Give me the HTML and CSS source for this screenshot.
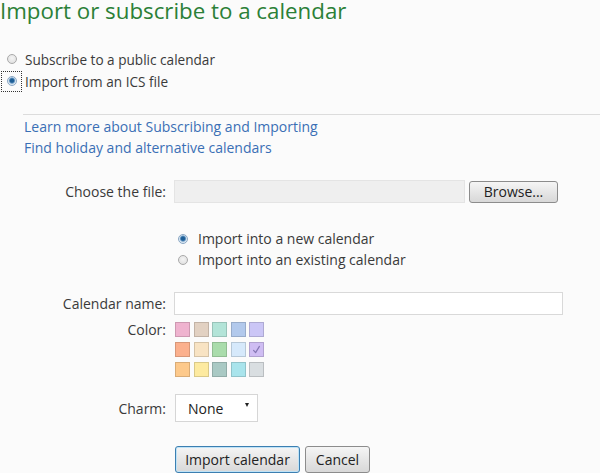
FILE: index.html
```html
<!DOCTYPE html>
<html lang="en">
<head>
<meta charset="utf-8">
<title>Import or subscribe to a calendar</title>
<link rel="stylesheet" href="styles.css">
</head>
<body>
<h1 class="title">Import or subscribe to a calendar</h1>

<div class="source-options">
  <label class="source-option">
    <span class="focus-box"><span class="radio"></span></span>
    <span class="source-text">Subscribe to a public calendar</span>
  </label>
  <label class="source-option">
    <span class="focus-box focused"><span class="radio checked"></span></span>
    <span class="source-text tight">Import from an ICS file</span>
  </label>
</div>

<div class="divider"></div>

<div class="links">
  <a class="link" href="#">Learn more about Subscribing and Importing</a>
  <a class="link" href="#">Find holiday and alternative calendars</a>
</div>

<div class="form">
  <div class="row row-file">
    <span class="label">Choose the file:</span>
    <span class="file-field"></span>
    <button class="btn btn-browse" type="button">Browse...</button>
  </div>

  <div class="row row-target">
    <span class="label"></span>
    <div class="target-options">
      <label class="target-option"><span class="radio checked"></span><span>Import into a new calendar</span></label>
      <label class="target-option"><span class="radio"></span><span>Import into an existing calendar</span></label>
    </div>
  </div>

  <div class="row row-name">
    <span class="label">Calendar name:</span>
    <span class="text-field"></span>
  </div>

  <div class="row row-color">
    <span class="label label-color">Color:</span>
    <div class="swatches">
      <span class="swatch s1"></span>
      <span class="swatch s2"></span>
      <span class="swatch s3"></span>
      <span class="swatch s4"></span>
      <span class="swatch s5"></span>
      <span class="swatch s6"></span>
      <span class="swatch s7"></span>
      <span class="swatch s8"></span>
      <span class="swatch s9"></span>
      <span class="swatch s10 selected">
        <svg class="check" viewBox="0 0 15 15" width="15" height="15"><path d="M4.6 8.4 L6.6 10.6 L10.4 4.4" fill="none" stroke="#8577b4" stroke-width="1.2" stroke-linecap="round" stroke-linejoin="round"/></svg>
      </span>
      <span class="swatch s11"></span>
      <span class="swatch s12"></span>
      <span class="swatch s13"></span>
      <span class="swatch s14"></span>
      <span class="swatch s15"></span>
    </div>
  </div>

  <div class="row row-charm">
    <span class="label">Charm:</span>
    <span class="select"><span class="select-text">None</span><span class="select-arrow"></span></span>
  </div>

  <div class="row row-actions">
    <span class="label"></span>
    <button class="btn btn-primary" type="button">Import calendar</button>
    <button class="btn btn-cancel" type="button">Cancel</button>
  </div>
</div>
</body>
</html>
```

FILE: styles.css
```css
html, body {
  margin: 0;
  padding: 0;
}

body {
  background: #fbfbfb;
  font-family: "Open Sans", "Noto Sans", sans-serif;
  font-size: 14px;
  color: #3a3a3a;
  width: 600px;
  height: 473px;
  overflow: hidden;
}

.title {
  margin: -3px 0 0 0;
  font-size: 22.3px;
  line-height: 27px;
  font-weight: 400;
  color: #2b8037;
  white-space: nowrap;
}

.source-options {
  margin-top: 24px;
  display: flex;
  flex-direction: column;
}

.source-option {
  display: flex;
  align-items: center;
  height: 22px;
}

.focus-box {
  width: 21px;
  height: 21px;
  box-sizing: border-box;
  margin-left: 1px;
  border: 1px dotted transparent;
  display: flex;
  align-items: center;
  justify-content: center;
}

.focus-box.focused {
  border-color: #333;
}

.source-text {
  margin-left: 3px;
  font-size: 13.6px;
}

.radio {
  width: 10px;
  height: 10px;
  box-sizing: border-box;
  border-radius: 50%;
  border: 1px solid #a9a9a9;
  background: radial-gradient(circle at 50% 40%, #f4f4f4 0%, #dcdcdc 100%);
  display: inline-block;
  flex: none;
}

.radio.checked {
  border-color: #8aa7c4;
  background: radial-gradient(circle at 50% 45%, #1d5e96 0 28%, #5b8fbd 42%, #d9e6f1 60%, #eef3f8 100%);
}

.divider {
  margin: 22px 0 0 23px;
  height: 1px;
  background: #dcdcdc;
}

.links {
  margin-top: 1px;
  padding-left: 24px;
  display: flex;
  flex-direction: column;
  align-items: flex-start;
}

.link {
  line-height: 21px;
  color: #3a6fb5;
  text-decoration: none;
}

.form {
  margin-top: 22px;
  display: flex;
  flex-direction: column;
}

.row {
  display: flex;
  align-items: center;
}

.label {
  width: 166px;
  margin-right: 8px;
  text-align: right;
  flex: none;
  white-space: nowrap;
}

.file-field {
  width: 291px;
  height: 23px;
  box-sizing: border-box;
  border: 1px solid #e4e4e4;
  background: #efefef;
}

.btn {
  font-family: inherit;
  font-size: 14px;
  color: #222;
  border: 1px solid #8c8c8c;
  border-radius: 3px;
  background: linear-gradient(#f5f5f5, #e6e6e6 50%, #d8d8d8);
  padding: 0;
  box-sizing: border-box;
}

.btn-browse {
  margin-left: 4px;
  width: 89px;
  height: 22px;
}

.row-target {
  margin-top: 25px;
}

.target-options {
  display: flex;
  flex-direction: column;
  margin-left: 4px;
}

.target-option {
  display: flex;
  align-items: center;
  height: 21px;
}

.target-option .radio {
  margin-right: 10px;
}

.row-name {
  margin-top: 22px;
}

.text-field {
  width: 389px;
  height: 23px;
  box-sizing: border-box;
  border: 1px solid #d9d9d9;
  background: #fff;
}

.row-color {
  margin-top: 7px;
  align-items: flex-start;
}

.label-color {
  line-height: 15px;
}

.swatches {
  margin-left: 1px;
  display: grid;
  grid-template-columns: repeat(5, 15px);
  grid-auto-rows: 15px;
  column-gap: 3.5px;
  row-gap: 5px;
}

.swatch {
  box-sizing: border-box;
  border: 1px solid rgba(0, 0, 0, 0.14);
  display: block;
}

.check {
  display: block;
  margin: -1px;
}

.s1 { background: #efb3cf; }
.s2 { background: #e2d1c2; }
.s3 { background: #b3e4d8; }
.s4 { background: #b2c9ec; }
.s5 { background: #cbc6f6; }
.s6 { background: #fbb08d; }
.s7 { background: #f8e3c3; }
.s8 { background: #a9dcab; }
.s9 { background: #d6e9fb; }
.s10 { background: #cfbdf3; }
.s11 { background: #fdc98b; }
.s12 { background: #fdeaa0; }
.s13 { background: #a9c9c4; }
.s14 { background: #a9e4ec; }
.s15 { background: #d9dee1; }

.row-charm {
  margin-top: 17px;
}

.select {
  margin-left: 1px;
  width: 83px;
  height: 28px;
  box-sizing: border-box;
  border: 1px solid #d6d6d6;
  background: #fff;
  position: relative;
  display: flex;
  align-items: center;
}

.select-text {
  margin-left: 12px;
  color: #222;
}

.select-arrow {
  position: absolute;
  right: 8px;
  top: 8px;
  width: 0;
  height: 0;
  border-left: 2.5px solid transparent;
  border-right: 2.5px solid transparent;
  border-top: 4px solid #222;
}

.row-actions {
  margin-top: 24px;
}

.btn-primary {
  margin-left: 1px;
  width: 125px;
  height: 27px;
  border-color: #3c7fb1;
  box-shadow: inset 0 0 0 1px #bfe3f7;
}

.btn-cancel {
  margin-left: 5px;
  width: 65px;
  height: 27px;
}
```
